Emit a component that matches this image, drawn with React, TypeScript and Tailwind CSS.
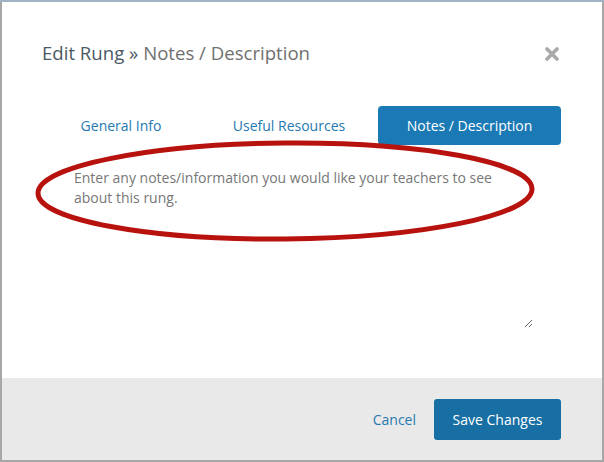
import React from "react";

export default function App() {
  return (
    <div className="relative w-[604px] h-[462px] overflow-hidden bg-[#a7a7a7] p-[2px] font-['Open_Sans',sans-serif]">
      <div className="flex flex-col h-full bg-white">
        {/* header */}
        <div className="flex items-center justify-between pt-[39px] pl-[40px] pr-[43px]">
          <h1 className="text-[18.6px] leading-[24px] font-normal">
            <span className="text-[#4b5a65]">Edit Rung »</span>{" "}
            <span className="text-[#707070]">Notes / Description</span>
          </h1>
          <svg width="14" height="14" viewBox="0 0 14 14" className="mt-[1px]">
            <path d="M2 2 L12 12 M12 2 L2 12" stroke="#a9a9a9" strokeWidth="3.6" strokeLinecap="round" />
          </svg>
        </div>

        {/* tabs */}
        <div className="flex mt-[41px] ml-[40px] w-[519px] h-[39px] text-[14px]">
          <div className="w-[158px] flex items-center justify-center text-[#2679b0]">General Info</div>
          <div className="w-[178px] flex items-center justify-center text-[#2679b0]">Useful Resources</div>
          <div className="w-[183px] flex items-center justify-center bg-[#1b7ab5] text-white rounded-[4px]">Notes / Description</div>
        </div>

        {/* body */}
        <div className="flex-1 pl-[60px] pr-[69px] pt-[11px]">
          <textarea
            className="block w-full h-[172px] px-[12px] py-[12px] text-[14px] leading-[20px] outline-none border-0 resize-y text-[#555] placeholder:text-[#777] font-['Open_Sans',sans-serif]"
            placeholder="Enter any notes/information you would like your teachers to see about this rung."
          />
        </div>

        {/* footer */}
        <div className="h-[82px] bg-[#e9e9e9] flex items-start justify-end pt-[21px] pr-[41px] gap-[18px] text-[14px]">
          <button className="h-[41px] text-[#2679b0]">Cancel</button>
          <button className="h-[41px] w-[127px] bg-[#176fa4] text-white rounded-[3px]">Save Changes</button>
        </div>
      </div>

      {/* top strip of background page */}
      <div className="absolute left-0 top-0 w-full h-[2px] bg-[#9fb3c4]" />

      {/* red annotation ellipse */}
      <svg className="absolute left-0 top-0 pointer-events-none" width="604" height="462">
        <ellipse cx="285" cy="191" rx="247" ry="48" fill="none" stroke="#b8120e" strokeWidth="5" transform="rotate(-0.5 285 191)" />
      </svg>
    </div>
  );
}
